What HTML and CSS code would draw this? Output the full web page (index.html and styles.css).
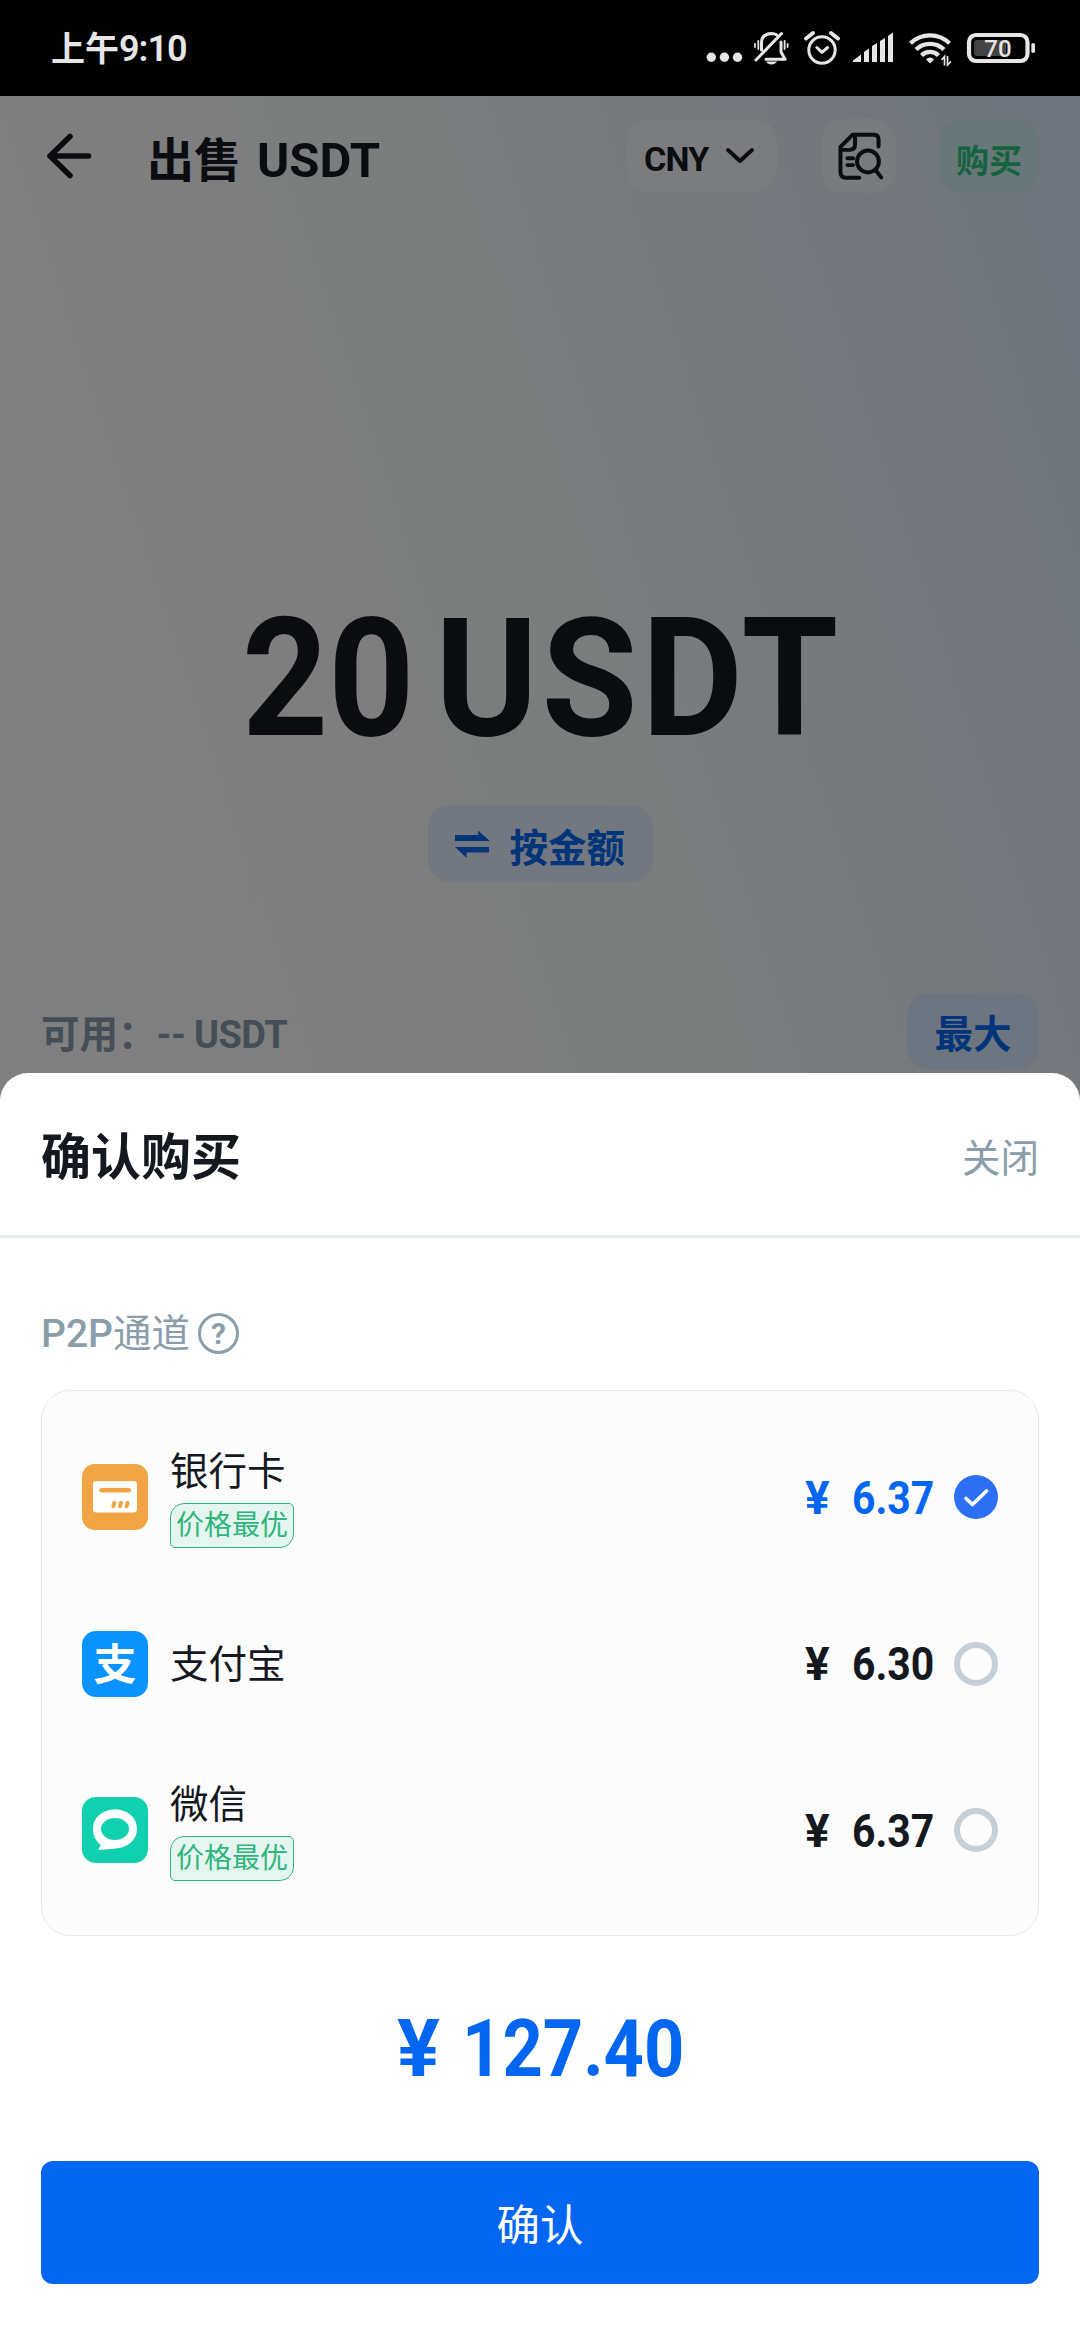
FILE: index.html
```html
<!DOCTYPE html>
<html lang="zh-CN">
<head>
<meta charset="utf-8">
<title>出售 USDT</title>
<link rel="stylesheet" href="styles.css">
</head>
<body>
<div class="status-bar">
  <div class="status-time">上午<span class="clock">9:10</span></div>
  <svg class="status-icons" width="340" height="40" viewBox="700 28 340 40">
    <g fill="#e6e6e6">
      <circle cx="711.3" cy="57.3" r="4.7"/><circle cx="724.4" cy="57.3" r="4.7"/><circle cx="737.5" cy="57.3" r="4.7"/>
      <path d="M853 62v-1.500l8-6V62zM864 62V52l5-3.500V62zM872 62V46l5-3V62zM880 62V41l5-3V62zM888 62V36l5-3.500V62z"/>
      <path d="M766 61.500h11q-2 3-5.500 3t-5.500-3z"/>
      <path d="M930 63.500l-4-4q4-4 8 0z"/>
      <rect x="1031.300" y="43" width="3.700" height="10" rx="1.800"/>
    </g>
    <g fill="none" stroke="#e6e6e6" stroke-width="3" stroke-linecap="round" stroke-linejoin="round">
      <path d="M761.500 50v-7q0-9 10-9.500q3 0 5 1.300M781 42v10l4 7.300h-19M756 60l25.500-26.500"/>
      <path d="M755 44v3M758.300 41v8M784.600 41v8M787.600 44v3" stroke-width="1.800"/>
      <circle cx="822" cy="50" r="13.200"/>
      <path d="M816.800 47.500l5.200 4.800 5.500-4.800"/>
      <path d="M806 38.500l7-5.500M831 33l7 5.500" stroke-width="4"/>
    </g>
    <g fill="none" stroke="#e6e6e6" stroke-width="4.200">
      <path d="M910.500 43.200a28 28 0 0 1 39 0M916 49.500a20 20 0 0 1 28 0M921.500 55.500a12 12 0 0 1 17 0"/>
      <path d="M944.500 65.500v-9l-3 3.500M947.500 56v9l3.500-3.500" stroke-width="1.700"/>
      <rect x="969" y="35" width="58.500" height="26" rx="7"/>
    </g>
    <rect x="974" y="40" width="32" height="16" rx="3" fill="#444"/>
    <text class="battery-level" x="998" y="56.600" text-anchor="middle">70</text>
  </svg>
</div>

<main class="screen">
  <header class="top-bar">
    <svg class="back" width="46" height="46" viewBox="0 0 46 46"><path d="M24 3.500L4 23l20 19.500M4 23h38.500" fill="none" stroke="#0a0c10" stroke-width="5.500" stroke-linecap="round" stroke-linejoin="round"/></svg>
    <h1 class="page-title">出售<span>USDT</span></h1>
    <div class="chip currency"><span>CNY</span>
      <svg width="30" height="18" viewBox="0 0 30 18"><path d="M3 3l12 11L27 3" fill="none" stroke="#0a0c10" stroke-width="4" stroke-linecap="round" stroke-linejoin="round"/></svg>
    </div>
    <div class="chip orders">
      <svg width="50" height="53" viewBox="705 390 150 160"><path d="M833 440v-22q0-14-14-14h-64l-37 37v76q0 17 17 17h40M762 408v26q0 16-16 16h-24M739 475h17M739 496h17M824 511l17 22" fill="none" stroke="#0a0c10" stroke-width="12" stroke-linecap="round" stroke-linejoin="round"/><circle cx="801" cy="485" r="33" fill="none" stroke="#0a0c10" stroke-width="12"/></svg>
    </div>
    <div class="chip buy">购买</div>
  </header>
  <div class="amount"><span class="amount-value">20</span><span class="amount-unit">USDT</span></div>
  <div class="switch-mode">
    <svg width="36" height="28" viewBox="0 0 36 28"><path d="M0 5h23V0.500l12 10.500H0zM34 17v5.500H11.500V28L0 17z" fill="#02347a"/></svg>
    <span>按金额</span>
  </div>
  <div class="balance"><div class="available">可用：<span>-- USDT</span></div><div class="max">最大</div></div>

  <section class="sheet">
    <div class="sheet-head"><h2>确认购买</h2><span class="close">关闭</span></div>
    <div class="sheet-body">
      <div class="channel-title"><span class="p2p">P2P</span><span class="channel">通道</span><i class="help">?</i></div>
      <div class="methods">
        <div class="method selected">
          <svg class="logo" width="66" height="66" viewBox="0 0 66 66"><rect width="66" height="66" rx="13" fill="#f0a444"/><rect x="11" y="17" width="44" height="31.500" rx="3.500" fill="#fff"/><path d="M19.500 26.300h27.300" stroke="#f0a444" stroke-width="4.500" stroke-linecap="round"/><path d="M31.300 42.300l1-3.400M38 42.300l1-3.400M44.600 42.300l1-3.400" stroke="#f0a444" stroke-width="4" stroke-linecap="round"/></svg>
          <div class="name"><span>银行卡</span><em class="badge">价格最优</em></div>
          <div class="price"><span>¥</span><span class="num">6.37</span></div>
          <svg class="radio" width="44" height="44" viewBox="0 0 44 44"><circle cx="22" cy="22" r="22" fill="#2d70f5"/><path d="M12 23.500l6.500 6L32.500 16" fill="none" stroke="#fff" stroke-width="3.600" stroke-linecap="round" stroke-linejoin="round"/></svg>
        </div>
        <div class="method">
          <div class="logo alipay">支</div>
          <div class="name single"><span>支付宝</span></div>
          <div class="price"><span>¥</span><span class="num">6.30</span></div>
          <div class="radio empty"></div>
        </div>
        <div class="method">
          <svg class="logo" width="66" height="66" viewBox="0 0 66 66"><rect width="66" height="66" rx="14" fill="#11d0b0"/><path d="M33 12.500c12.500 0 22 8 22 19.200S46 50.500 34 51.500L17 53q-1 0-.300-1l2-4C14 44 11 38.500 11 32c0-11.500 9.500-19.500 22-19.500z" fill="#fff"/><ellipse cx="33" cy="32" rx="14" ry="11" fill="#11d0b0"/></svg>
          <div class="name"><span>微信</span><em class="badge">价格最优</em></div>
          <div class="price"><span>¥</span><span class="num">6.37</span></div>
          <div class="radio empty"></div>
        </div>
      </div>
      <div class="total"><span>¥</span><span class="num">127.40</span></div>
      <button class="confirm">确认</button>
    </div>
  </section>
</main>
</body>
</html>
```
FILE: styles.css
```css
* { box-sizing: border-box; }
body {
  margin: 0;
  width: 1080px;
  height: 2340px;
  overflow: hidden;
  background: #000;
  font-family: Roboto, "Noto Sans CJK SC", sans-serif;
  white-space: nowrap;
}
h1, h2 { margin: 0; }
svg { display: block; flex: none; }

.status-bar {
  height: 96px;
  padding: 0 40px 0 51px;
  display: flex;
  justify-content: space-between;
  align-items: center;
  color: #e6e6e6;
}
.status-time { font-size: 34px; font-weight: 700; line-height: 40px; padding-top: 2px; }
.clock { font-size: 36px; font-weight: 600; letter-spacing: -1px; }
.battery-level { font-size: 24px; font-weight: 500; fill: #e6e6e6; }

.screen {
  height: 2244px;
  display: flex;
  flex-direction: column;
  padding-top: 23px;
  color: #0a0c10;
  background: linear-gradient(72deg, #808080 0%, #7f7f7f 25%, #7a7c7d 55%, #74787d 80%, #6f757e 100%) 0 0 / 100% 1010px no-repeat;
}

.top-bar { height: 74px; padding: 0 42px 0 46px; display: flex; align-items: center; }
.page-title { margin-left: 55px; padding-top: 10px; font-size: 47px; font-weight: 700; line-height: 60px; }
.page-title span { margin-left: 16px; font-size: 49px; }
.chip { height: 74px; display: flex; align-items: center; border-radius: 23px; }
.currency { margin-left: auto; width: 151px; padding-left: 18px; gap: 17px; background: #7b7c7e; }
.currency span { font-size: 34px; font-weight: 700; letter-spacing: -0.8px; padding-top: 6px; }
.orders { margin-left: 44px; width: 75px; padding-left: 15px; background: #797b7f; }
.buy { margin-left: 44px; width: 98px; justify-content: center; background: #67777a; color: #14633e; font-size: 33px; font-weight: 700; padding-top: 6px; }

.amount { height: 166px; margin-top: 403px; padding-left: 242px; display: flex; font-size: 166px; font-weight: 700; line-height: 166px; }
.amount span { transform-origin: left center; }
.amount-value { width: 193px; transform: scaleX(0.905); }
.amount-unit { transform: scaleX(0.94); letter-spacing: 4px; }

.switch-mode {
  width: 225px;
  height: 77px;
  margin: 43px auto 0;
  padding-left: 27px;
  display: flex;
  align-items: center;
  gap: 19px;
  border-radius: 22px;
  background: #737780;
  color: #02347a;
  font-size: 38.5px;
  font-weight: 700;
}
.switch-mode span { padding-top: 2px; }

.balance { height: 76px; margin-top: 111px; padding: 0 41px; display: flex; justify-content: space-between; align-items: center; }
.available { font-size: 38.5px; font-weight: 700; line-height: 50px; color: #454e56; padding-top: 7px; }
.available span { font-size: 38px; letter-spacing: -0.6px; }
.max { width: 132px; height: 76px; border-radius: 22px; background: #6d7680; color: #02347a; font-size: 38.5px; font-weight: 700; line-height: 84px; text-align: center; }

.sheet { margin-top: 4px; flex: 1; background: #fff; border-radius: 28px 28px 0 0; color: #14191f; }
.sheet-head { height: 165px; padding: 7px 41px 0 41px; display: flex; justify-content: space-between; align-items: center; border-bottom: 3px solid #e5eaea; }
.sheet-head h2 { font-size: 50px; font-weight: 600; line-height: 60px; }
.close { font-size: 38.5px; line-height: 50px; color: #8a9dab; padding-top: 2px; }
.sheet-body { padding: 74px 41px 0; }

.channel-title { height: 42px; display: flex; align-items: center; font-size: 38.5px; line-height: 42px; color: #8a9dab; }
.p2p { width: 72px; font-size: 39px; font-weight: 500; padding-top: 2px; }
.channel { padding-top: 2px; }
.help { width: 41px; height: 41px; margin-left: 8px; border: 3px solid #8a9dab; border-radius: 50%; font: 700 30px/35px Roboto, sans-serif; text-align: center; }

.methods { height: 546px; margin-top: 36px; padding: 23px 40px 0; border: 1px solid #e5e8ea; border-radius: 29px; background: #fcfcfc; }
.method { height: 166.5px; display: flex; align-items: center; }
.logo { width: 66px; height: 66px; }
.alipay { border-radius: 14px; background: #0b94ff; color: #fff; font-size: 43px; font-weight: 700; line-height: 69px; text-align: center; }
.name { margin-left: 22px; display: flex; flex-direction: column; align-items: flex-start; font-size: 38.5px; line-height: 50px; }
.single { padding-top: 3px; }
.badge { width: 124px; height: 45px; margin-top: 6px; border: 1px solid #2fb57c; border-radius: 14px 5px; background: #e5f5ef; color: #2fb57c; font-size: 28px; font-style: normal; line-height: 44px; text-align: center; }
.price { margin-left: auto; width: 127px; display: flex; font-size: 46px; font-weight: 700; line-height: 50px; padding-top: 1px; }
.price .num { margin-left: 22px; width: 80px; transform: scaleX(0.89); transform-origin: left center; }
.selected .price { color: #0266f0; }
.radio { margin-left: 22px; flex: none; }
.empty { width: 44px; height: 44px; border: 6px solid #c6cfd6; border-radius: 50%; }

.total { margin-top: 73px; padding-left: 356px; display: flex; font-size: 80px; font-weight: 700; line-height: 81px; height: 80px; color: #0266f0; }
.total .num { margin-left: 22px; transform: scaleX(0.88); transform-origin: left center; }
.confirm { display: block; width: 100%; height: 123px; margin-top: 72px; padding: 0; border: 0; border-radius: 12px; background: #0266f0; color: #fff; font: 400 43.5px Roboto, "Noto Sans CJK SC", sans-serif; }
```
